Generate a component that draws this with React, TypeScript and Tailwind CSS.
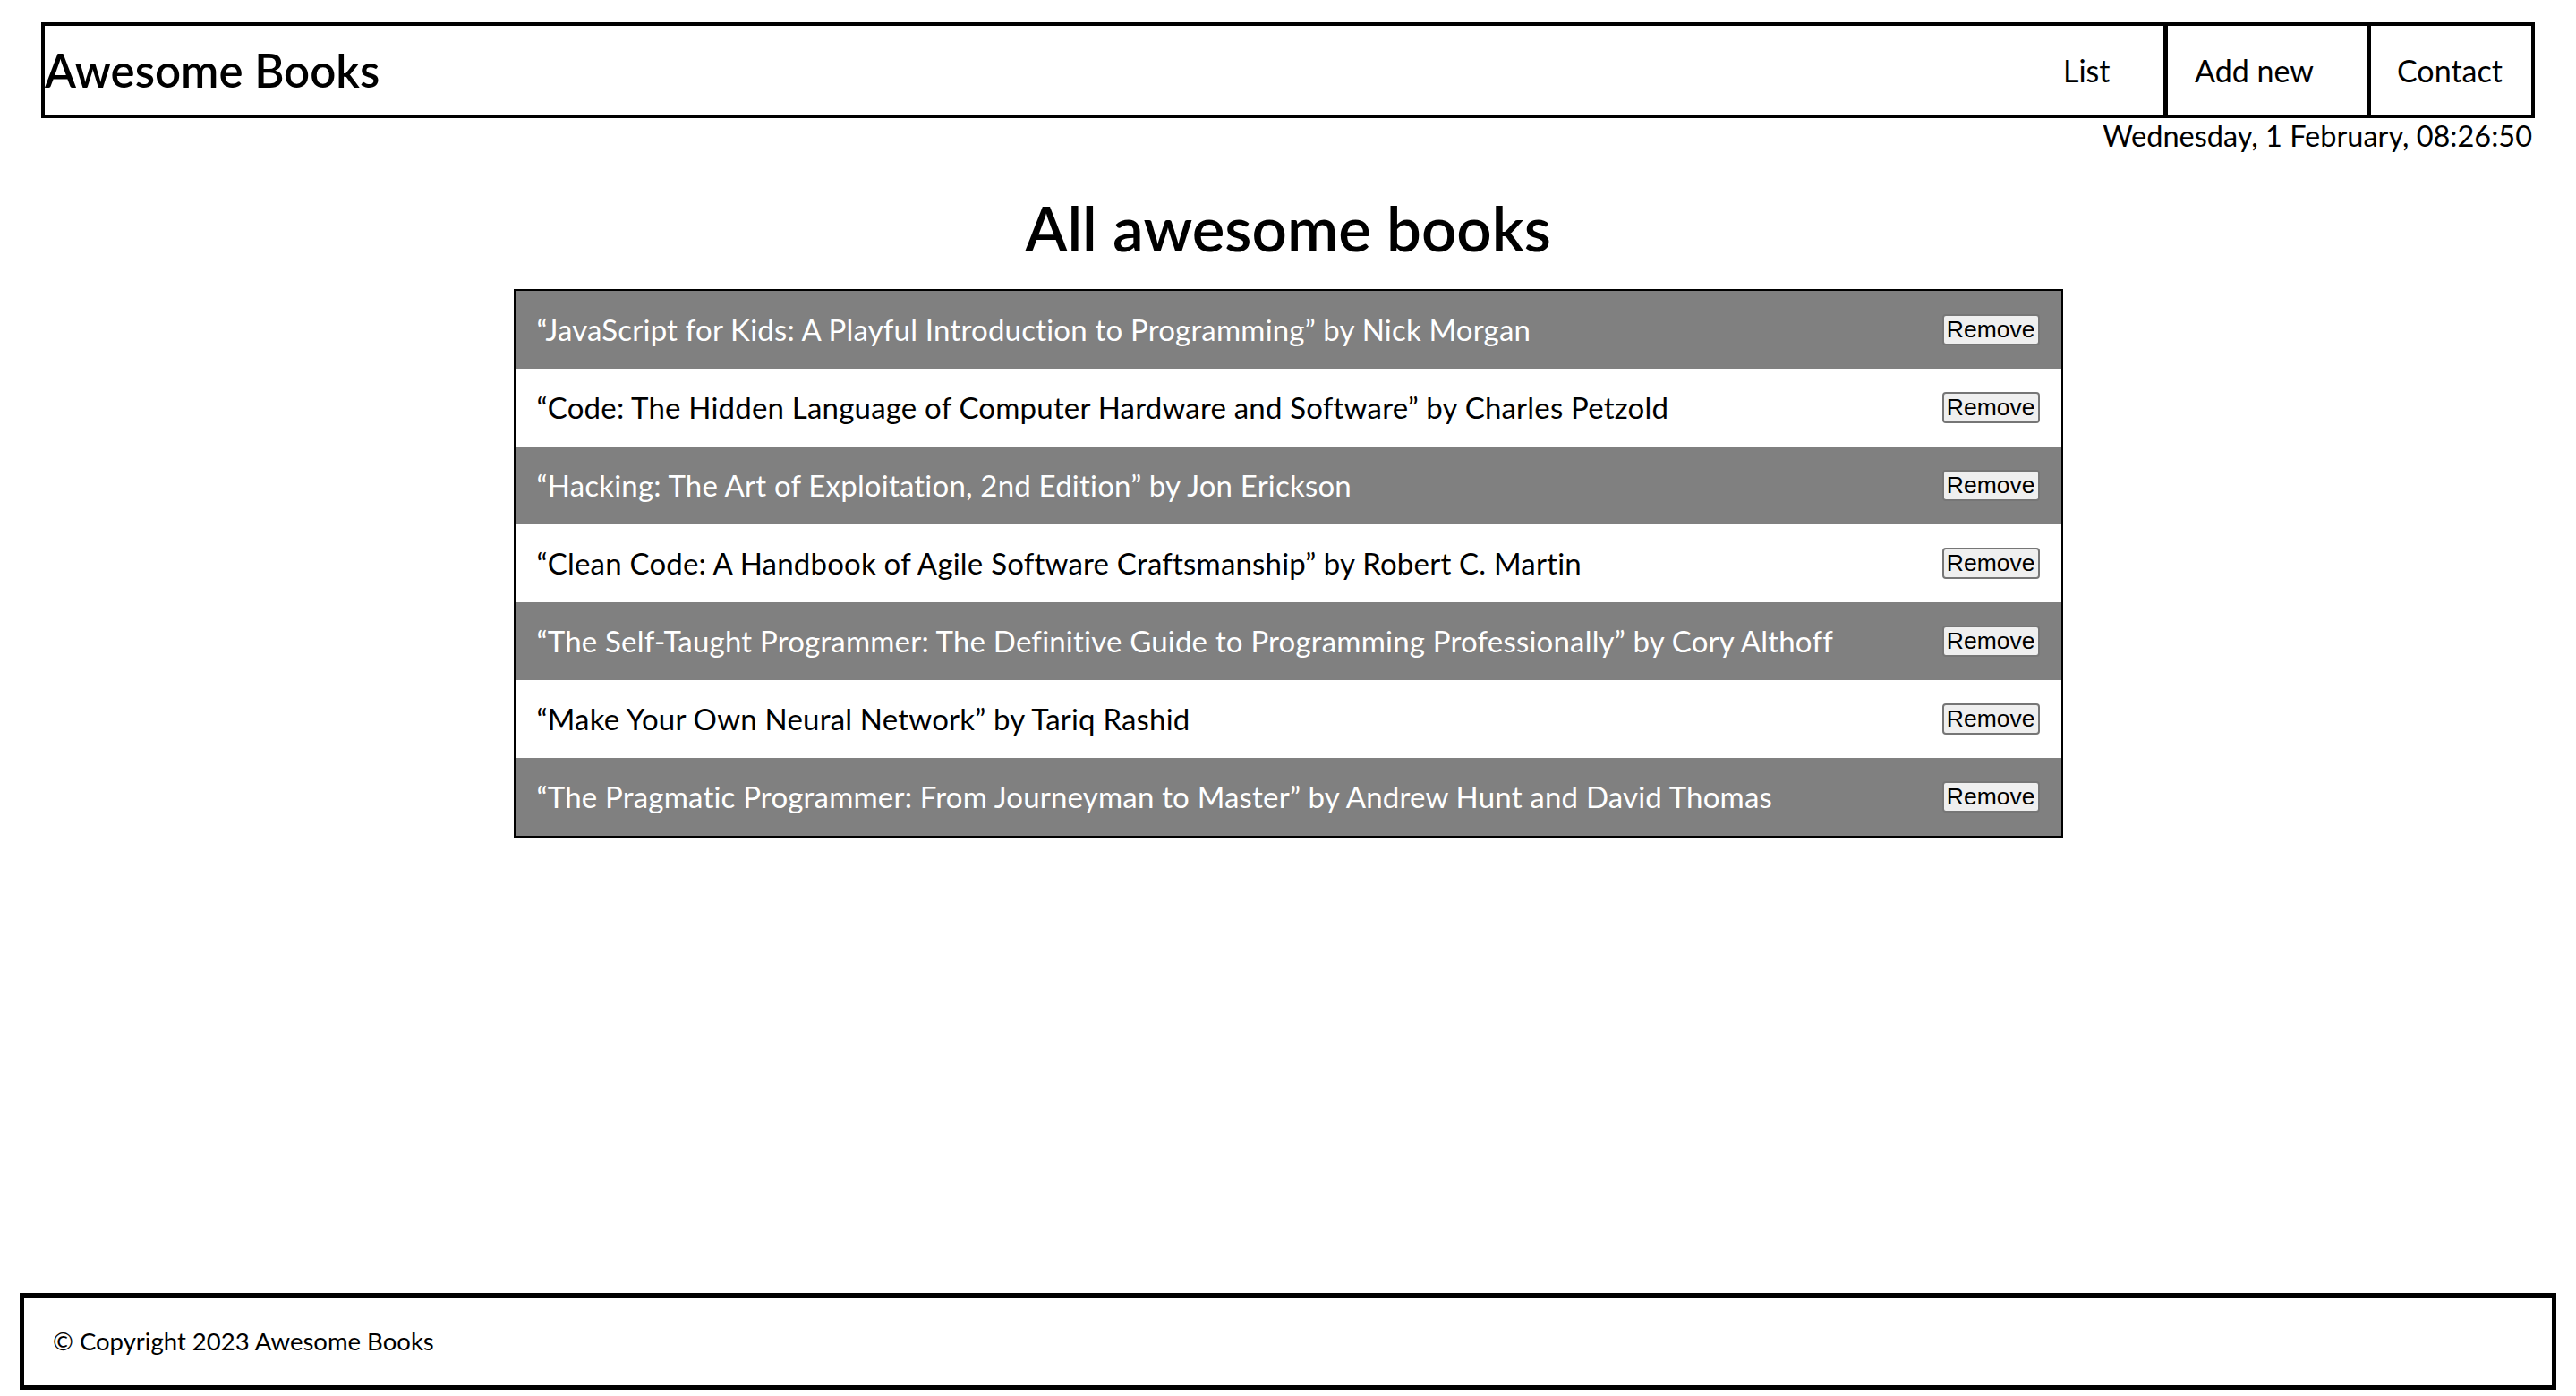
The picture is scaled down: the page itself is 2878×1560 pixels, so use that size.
const BOOKS: { title: string; author: string }[] = [
  { title: 'JavaScript for Kids: A Playful Introduction to Programming', author: 'Nick Morgan' },
  { title: 'Code: The Hidden Language of Computer Hardware and Software', author: 'Charles Petzold' },
  { title: 'Hacking: The Art of Exploitation, 2nd Edition', author: 'Jon Erickson' },
  { title: 'Clean Code: A Handbook of Agile Software Craftsmanship', author: 'Robert C. Martin' },
  { title: 'The Self-Taught Programmer: The Definitive Guide to Programming Professionally', author: 'Cory Althoff' },
  { title: 'Make Your Own Neural Network', author: 'Tariq Rashid' },
  { title: 'The Pragmatic Programmer: From Journeyman to Master', author: 'Andrew Hunt and David Thomas' },
];

function Header() {
  return (
    <header className="mx-[46px] mt-[25px] flex h-[107px] items-center justify-between border-4 border-black">
      <h2 className="text-[51px] font-semibold leading-none">Awesome Books</h2>
      <ul className="flex h-full text-[34px]">
        <li className="flex w-[164px] items-center pl-[52px]">List</li>
        <li className="flex w-[227px] items-center border-l-[5px] border-black pl-[30px]">Add new</li>
        <li className="flex w-[184px] items-center border-l-[5px] border-black pl-[29px]">Contact</li>
      </ul>
    </header>
  );
}

export default function App() {
  return (
    <div className="flex h-[1560px] flex-col bg-white text-black" style={{ fontFamily: 'Lato, "Open Sans", sans-serif' }}>
      <Header />
      <p className="mx-[46px] h-[40px] pr-[3px] text-right text-[32.5px] leading-[40px]">
        Wednesday, 1 February, 08:26:50
      </p>

      <main className="flex flex-col items-center">
        <h1 className="mt-[41px] h-[110px] text-[69px] font-semibold leading-[84px]">All awesome books</h1>
        <ul className="w-[1731px] border-2 border-black">
          {BOOKS.map((b, i) => (
            <li
              key={b.title}
              className={`flex h-[87px] items-center justify-between px-[24px] text-[33px] tracking-[0.2px] ${
                i % 2 === 0 ? 'bg-[#808080] text-white' : 'bg-white text-black'
              }`}
            >
              <span>
                “{b.title}” by {b.author}
              </span>
              <button
                className="h-[35px] rounded-[4px] border-2 border-[#767676] bg-[#efefef] px-[3px] text-[26.5px] leading-[29px] tracking-normal text-black"
                style={{ fontFamily: '"Liberation Sans", Arial, sans-serif' }}
              >
                Remove
              </button>
            </li>
          ))}
        </ul>
      </main>

      <footer className="mx-[22px] mb-[7px] mt-auto flex h-[108px] items-center border-[5px] border-black pl-[32px] text-[27.5px]">
        © Copyright 2023 Awesome Books
      </footer>
    </div>
  );
}
